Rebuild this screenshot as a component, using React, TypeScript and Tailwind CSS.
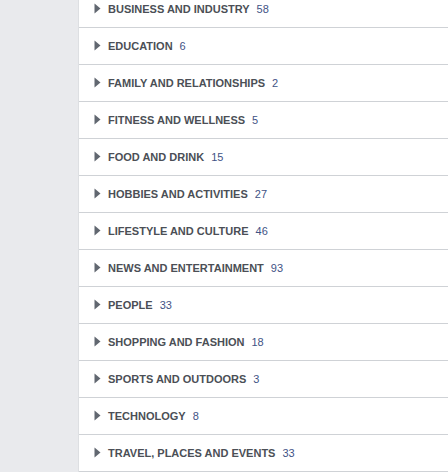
import React from "react";

const items: [string, number][] = [
  ["BUSINESS AND INDUSTRY", 58],
  ["EDUCATION", 6],
  ["FAMILY AND RELATIONSHIPS", 2],
  ["FITNESS AND WELLNESS", 5],
  ["FOOD AND DRINK", 15],
  ["HOBBIES AND ACTIVITIES", 27],
  ["LIFESTYLE AND CULTURE", 46],
  ["NEWS AND ENTERTAINMENT", 93],
  ["PEOPLE", 33],
  ["SHOPPING AND FASHION", 18],
  ["SPORTS AND OUTDOORS", 3],
  ["TECHNOLOGY", 8],
  ["TRAVEL, PLACES AND EVENTS", 33],
];

export default function App() {
  return (
    <div className="flex h-[472px] w-[448px] overflow-hidden bg-[#e9eaed] font-['Liberation_Sans',Arial,sans-serif]">
      <div className="w-[78px] shrink-0" />
      <div className="flex-1 bg-white border-l border-[#dddfe2] -mt-[9px]">
        {items.map(([name, n]) => (
          <div
            key={name}
            className="flex h-[37px] items-center border-b border-[#cfd2d6] pl-[15px]"
          >
            <svg width="7" height="11" viewBox="0 0 7 11" className="mr-[7px] mt-[-1px]">
              <path d="M0.5 0.5 L6.5 5.5 L0.5 10.5 Z" fill="#616770" />
            </svg>
            <span className="text-[11px] font-bold text-[#4b4f56] leading-none">{name}</span>
            <span className="ml-[7px] text-[11px] text-[#3f5385] leading-none">{n}</span>
          </div>
        ))}
      </div>
    </div>
  );
}
